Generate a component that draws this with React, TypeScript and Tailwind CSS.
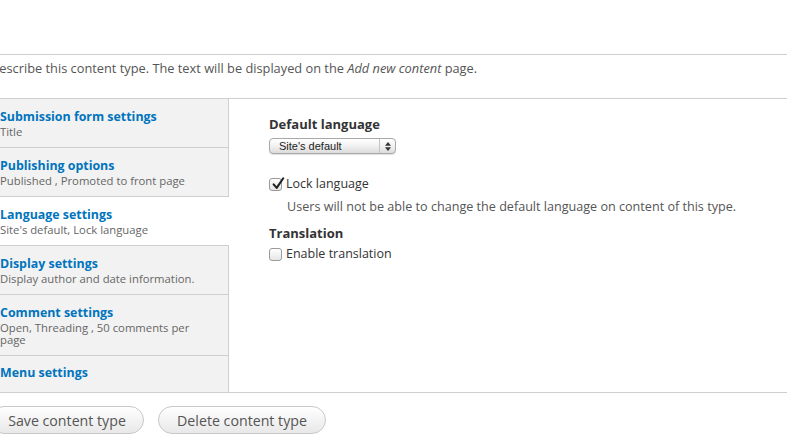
import React from "react";

type Tab = {
  title: string;
  summary?: string;
  selected?: boolean;
};

const tabs: Tab[] = [
  { title: "Submission form settings", summary: "Title" },
  { title: "Publishing options", summary: "Published , Promoted to front page" },
  { title: "Language settings", summary: "Site's default, Lock language", selected: true },
  { title: "Display settings", summary: "Display author and date information." },
  { title: "Comment settings", summary: "Open, Threading , 50 comments per page" },
  { title: "Menu settings" },
];

function Checkbox({ checked }: { checked?: boolean }) {
  return (
    <span className="relative inline-flex h-[13px] w-[13px] shrink-0 rounded-[3px] border border-[#9a9a9a] bg-gradient-to-b from-white to-[#e6e6e6] shadow-[inset_0_1px_0_#fff]">
      {checked && (
        <svg
          viewBox="0 0 16 16"
          className="absolute -top-[3px] left-[1px] h-[15px] w-[14px]"
          fill="none"
          stroke="#222"
          strokeWidth="2.4"
          strokeLinecap="round"
          strokeLinejoin="round"
        >
          <path d="M3 9 L6.5 13 L14 2" />
        </svg>
      )}
    </span>
  );
}

function SelectBox() {
  return (
    <div className="flex h-[16px] w-[127px] items-center rounded-[4px] border border-[#a8a8a8] bg-gradient-to-b from-white via-[#f1f1f1] to-[#dcdcdc] text-[11px] leading-none text-[#222] shadow-[0_1px_1px_rgba(0,0,0,0.12)] font-['Liberation_Sans',sans-serif]">
      <span className="flex-1 pl-[9px]">Site's default</span>
      <span className="flex h-full w-[16px] items-center justify-center border-l border-[#c4c4c4]">
        <svg viewBox="0 0 8 12" className="h-[9px] w-[6px]" fill="#333">
          <path d="M4 0 L8 5 L0 5 Z" />
          <path d="M4 12 L8 7 L0 7 Z" />
        </svg>
      </span>
    </div>
  );
}

export default function App() {
  return (
    <div className="h-[443px] w-[787px] overflow-hidden bg-white text-[#333] font-['Open_Sans',sans-serif]">
      <div className="-ml-[10px] w-[797px]">
        <div className="h-[55px] border-b border-[#cfcfcf]" />
        <p className="mt-[4px] text-[12.8px] leading-[18px] text-[#555]">
          Describe this content type. The text will be displayed on the <em>Add new content</em> page.
        </p>

        {/* Vertical tabs */}
        <div className="mt-[21px] flex border-y border-[#cfcfcf]">
          <div className="w-[239px] shrink-0 bg-[#f2f2f2]">
            {tabs.map((tab, i) => (
              <div
                key={tab.title}
                className={
                  (tab.selected ? "bg-white " : "border-r border-[#cfcfcf] ") +
                  (i < tabs.length - 1 ? "border-b border-[#cfcfcf] " : "") +
                  (tab.summary ? "pt-2 pb-[9px] pl-[10px] pr-3" : "pt-[7px] pb-[10px] pl-[10px] pr-3")
                }
              >
                <div className="text-[12.4px] font-bold leading-[19px] text-[#0074bd]">{tab.title}</div>
                {tab.summary && (
                  <div className="text-[11.3px] leading-[12px] text-[#666]">{tab.summary}</div>
                )}
              </div>
            ))}
          </div>

          <div className="flex-1 pl-[40px] pt-[16px]">
            <div className="text-[13px] font-bold leading-[18px] text-[#333]">Default language</div>
            <div className="mt-[5px]">
              <SelectBox />
            </div>
            <label className="mt-[21px] flex items-center gap-[4px] text-[12.5px] leading-[18px] text-[#333]">
              <Checkbox checked />
              Lock language
            </label>
            <p className="mt-[5px] pl-[18px] text-[12.6px] leading-[18px] text-[#555]">
              Users will not be able to change the default language on content of this type.
            </p>
            <div className="mt-[8px] text-[13px] font-bold leading-[18px] text-[#333]">Translation</div>
            <label className="mt-[3px] flex items-center gap-[4px] text-[12.5px] leading-[18px] text-[#333]">
              <Checkbox />
              Enable translation
            </label>
          </div>
        </div>

        {/* Actions */}
        <div className="mt-[13px] flex gap-[14px]">
          <button className="h-[28px] w-[154px] rounded-full border border-[#c8c8c8] bg-gradient-to-b from-white to-[#e8e8e8] pt-[1px] text-[14.2px] text-[#555]">
            Save content type
          </button>
          <button className="h-[28px] w-[168px] rounded-full border border-[#c8c8c8] bg-gradient-to-b from-white to-[#e8e8e8] pt-[1px] text-[14.2px] text-[#555]">
            Delete content type
          </button>
        </div>
      </div>
    </div>
  );
}
